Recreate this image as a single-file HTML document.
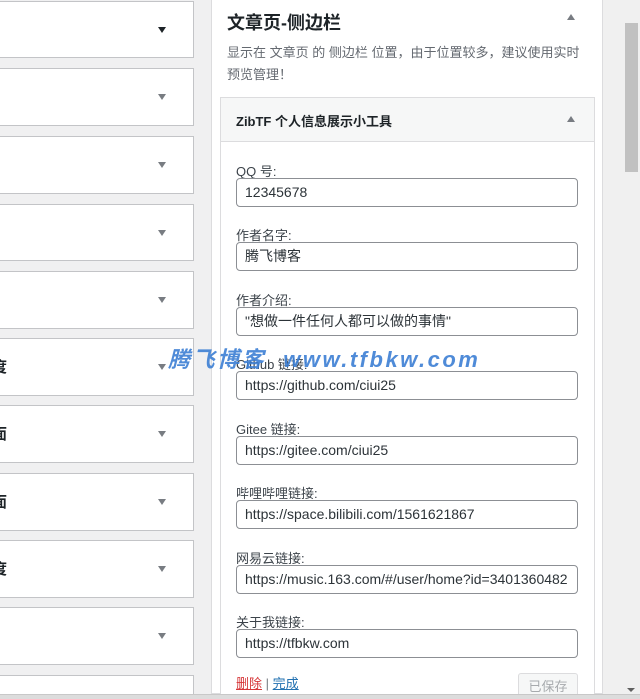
<!DOCTYPE html>
<html style="overflow:hidden;width:640px;height:699px"><head><meta charset="utf-8">
<style>
*{margin:0;padding:0;box-sizing:border-box}
body{width:640px;height:699px;overflow:hidden;background:#f0f0f1;position:relative;font-family:"Liberation Sans","Noto Sans CJK SC",sans-serif;color:#3c434a}
.lb{position:absolute;left:-2px;width:196px;background:#fff;border:1px solid #c3c4c7;overflow:hidden}
.lb .ar{position:absolute;left:159px;top:50%;margin-top:-3px;width:0;height:0;border-left:4px solid transparent;border-right:4px solid transparent;border-top:6px solid #787c82}
.lb .ch{position:absolute;left:-7px;top:50%;margin-top:-11px;font-size:15px;font-weight:bold;color:#1d2327}
.main{position:absolute;left:211px;top:-2px;width:392px;height:700px;background:#fff;border:1px solid #dcdcde}
.sb{position:absolute;left:603px;top:0;width:37px;height:694px;background:#f0f0f0}
.thumb{position:absolute;left:625px;top:23px;width:13px;height:149px;background:#c1c1c1}
.bot{position:absolute;left:0;top:694px;width:640px;height:5px;background:#dcdcdc;border-top:1px solid #c8c8c8}
.up{position:absolute;width:0;height:0;border-left:4px solid transparent;border-right:4px solid transparent;border-bottom:6px solid #787c82}
.h{position:absolute;left:227px;top:9px;font-size:18px;font-weight:bold;color:#1d2327}
.d{position:absolute;left:227px;top:42px;width:360px;font-size:13px;line-height:22px;color:#646970}
.w{position:absolute;left:220px;top:97px;width:375px;height:610px;border:1px solid #dcdcde;background:#fff}
.wh{position:absolute;left:0;top:0;width:373px;height:44px;background:#f6f7f7;border-bottom:1px solid #dcdcde}
.wh span{position:absolute;left:15px;top:13px;font-size:13px;font-weight:bold;color:#1d2327}
.lab{position:absolute;left:236px;font-size:13px;color:#3c434a}
.in{position:absolute;left:236px;width:342px;height:29px;border:1px solid #8c8f94;border-radius:4px;font-size:14px;line-height:27px;padding-left:8px;color:#2c3338;white-space:nowrap;overflow:hidden}
.wm{position:absolute;left:168px;top:342px;font-size:22px;font-weight:bold;font-style:italic;color:#3d7fd4;letter-spacing:2.5px;opacity:.9;white-space:nowrap}
</style></head><body>
<div class="lb" style="top:1px;height:57px"><div class="ar" style="border-top-color:#1d2327"></div></div>
<div class="lb" style="top:68px;height:58px"><div class="ar"></div></div>
<div class="lb" style="top:136px;height:58px"><div class="ar"></div></div>
<div class="lb" style="top:204px;height:57px"><div class="ar"></div></div>
<div class="lb" style="top:271px;height:58px"><div class="ar"></div></div>
<div class="lb" style="top:338px;height:58px"><div class="ch">度</div><div class="ar"></div></div>
<div class="lb" style="top:405px;height:58px"><div class="ch">面</div><div class="ar"></div></div>
<div class="lb" style="top:473px;height:58px"><div class="ch">面</div><div class="ar"></div></div>
<div class="lb" style="top:540px;height:58px"><div class="ch">度</div><div class="ar"></div></div>
<div class="lb" style="top:607px;height:58px"><div class="ar"></div></div>
<div class="lb" style="top:675px;height:24px"></div>

<div class="main" style="height:696px"></div>
<div class="h">文章页-侧边栏</div>
<div class="up" style="left:567px;top:14px"></div>
<div class="d">显示在 文章页 的 侧边栏 位置，由于位置较多，建议使用实时预览管理！</div>
<div class="w" style="height:600px"><div class="wh"><span>ZibTF 个人信息展示小工具</span></div></div>
<div class="up" style="left:567px;top:116px"></div>

<div class="lab" style="top:161px">QQ 号:</div>
<div class="in" style="top:178px">12345678</div>
<div class="lab" style="top:225px">作者名字:</div>
<div class="in" style="top:242px">腾飞博客</div>
<div class="lab" style="top:290px">作者介绍:</div>
<div class="in" style="top:307px">"想做一件任何人都可以做的事情"</div>
<div class="lab" style="top:354px">Github 链接:</div>
<div class="in" style="top:371px">https://github.com/ciui25</div>
<div class="lab" style="top:419px">Gitee 链接:</div>
<div class="in" style="top:436px">https://gitee.com/ciui25</div>
<div class="lab" style="top:483px">哔哩哔哩链接:</div>
<div class="in" style="top:500px">https://space.bilibili.com/1561621867</div>
<div class="lab" style="top:548px">网易云链接:</div>
<div class="in" style="top:565px">https://music.163.com/#/user/home?id=3401360482</div>
<div class="lab" style="top:612px">关于我链接:</div>
<div class="in" style="top:629px">https://tfbkw.com</div>
<div style="position:absolute;left:236px;top:673px;font-size:13px"><span style="color:#d63638;text-decoration:underline">删除</span> <span style="color:#787c82">|</span> <span style="color:#2271b1;text-decoration:underline">完成</span></div>
<div style="position:absolute;left:518px;top:673px;width:60px;height:28px;border:1px solid #dcdcde;border-radius:3px;background:#f6f7f7;color:#a7aaad;font-size:13px;text-align:center;line-height:26px">已保存</div>

<div class="wm">腾飞博客 &nbsp;www.tfbkw.com</div>

<div class="sb"></div>
<div class="thumb"></div>
<div style="position:absolute;left:627px;top:688px;width:0;height:0;border-left:4px solid transparent;border-right:4px solid transparent;border-top:4px solid #606060"></div>
<div class="bot"></div>
</body></html>
